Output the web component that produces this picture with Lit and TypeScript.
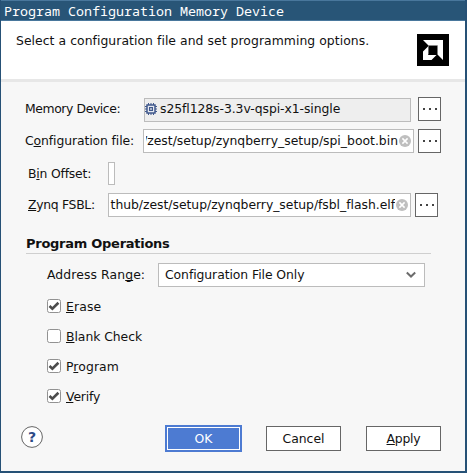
import { LitElement, html, svg, css, nothing } from "lit";
import { customElement, property } from "lit/decorators.js";

/** Text with an underlined mnemonic letter and a tracking adjustment. */
@customElement("ui-label")
class UiLabel extends LitElement {
  @property() text = "";
  @property({ type: Number }) key = -1;
  @property({ type: Number }) track = 0;

  static styles = css`
    :host { display: block; white-space: pre; line-height: 15px; }
    .key { text-decoration: underline; text-decoration-thickness: 1px; text-underline-offset: 1px; text-decoration-skip-ink: none; }
  `;

  render() {
    const { text: t, key: k } = this;
    return html`<span style="letter-spacing:${this.track}px">${k < 0
      ? t
      : html`${t.slice(0, k)}<span class="key">${t[k]}</span>${t.slice(k + 1)}`}</span>`;
  }
}

@customElement("browse-button")
class BrowseButton extends LitElement {
  static styles = css`
    :host { display: flex; box-sizing: border-box; width: 23px; height: 24px; border: 1px solid #666; background: #fff; align-items: center; padding-left: 4px; gap: 4px; flex: none; }
    i { width: 2px; height: 2px; background: #444; }
  `;
  render() {
    return html`<i></i><i></i><i></i>`;
  }
}

@customElement("check-item")
class CheckItem extends LitElement {
  @property({ type: Boolean }) checked = false;
  @property() text = "";
  @property({ type: Number }) key = 0;
  @property({ type: Number }) track = 0;

  static styles = css`
    :host { display: flex; height: 30px; gap: 5px; }
    svg { display: block; flex: none; }
  `;
  render() {
    return html`<svg width="14" height="14" viewBox="0 0 14 14">
        <rect x=".5" y=".5" width="13" height="13" rx="2" fill="#fff" stroke="#929292" />
        ${this.checked
          ? svg`<path d="M2.5 7L5.4 9.7L11.4 3.8" fill="none" stroke="#4c4c4c" stroke-width="2.6"/>`
          : nothing}
      </svg>
      <ui-label .text=${this.text} .key=${this.key} .track=${this.track}></ui-label>`;
  }
}

const clearIcon = html`<svg class="clear" width="12" height="12" viewBox="0 0 12 12">
  <circle cx="6" cy="6" r="6" fill="#bfbfbf" />
  <path d="M3.4 3.4L8.6 8.6M8.6 3.4L3.4 8.6" stroke="#fff" stroke-width="1.5" />
</svg>`;

const chipIcon = html`<svg class="chip" width="12" height="12" viewBox="0 0 12 12" fill="none" stroke="#40588c">
  <path d="M3.5 0V12M6 0V12M8.5 0V12M0 3.5H12M0 6H12M0 8.5H12" stroke-width="1" />
  <rect x="2" y="2" width="8" height="8" fill="#e6e9f0" stroke-width="1.5" />
  <rect x="4.5" y="4.5" width="3" height="3" fill="#a9b4cb" />
</svg>`;

@customElement("app-root")
class AppRoot extends LitElement {
  static styles = css`
    :host { display: block; width: 467px; height: 473px; box-sizing: border-box; overflow: hidden; background: #f7f7f7; color: #111; font: 12.4px/15px "DejaVu Sans", sans-serif; border: solid #265176; border-width: 0 2px 2px 1px; }
    .title { height: 21px; margin: 0 -2px 0 -1px; box-sizing: border-box; border: 1px solid #49779c; background: #285577; color: #fff; font: 13.33px/19px "Noto Sans Mono", "DejaVu Sans Mono", monospace; padding: 1px 0 0 3px; white-space: pre; }
    .head { height: 61px; box-sizing: border-box; border-bottom: 3px solid #e7e7e7; background: #fff; display: flex; justify-content: space-between; padding: 12px 16px 0 15px; }
    .head svg { margin-top: 1px; display: block; }
    .row { display: flex; align-items: flex-start; }
    .row > ui-label { flex: none; box-sizing: border-box; padding-top: 4px; }
    .field { display: flex; box-sizing: border-box; height: 24px; border: 1px solid #bcbcbc; background: #fff; padding-top: 3px; overflow: hidden; flex: none; }
    .path { justify-content: flex-end; padding-right: 2px; }
    .clip { overflow: hidden; display: flex; justify-content: flex-end; flex: 1; }
    .clear { flex: none; margin-top: 2px; margin-left: 1px; }
    .device { margin-top: 15px; padding-left: 24px; }
    .device .field { width: 267px; margin: 1px 7px 0 0; background: #eee; padding: 2px 0 0 0; }
    .device > ui-label { width: 119px; }
    .chip { margin: 2px 3px 0 0; }
    .config { margin-top: 7px; padding-left: 24px; }
    .config > ui-label { width: 118px; }
    .config .field { width: 271px; margin-right: 4px; padding-left: 2px; }
    .bin { margin-top: 9px; padding-left: 27px; }
    .bin > ui-label, .fsbl > ui-label { width: 80px; }
    .bin .field { width: 7px; height: 23px; }
    .fsbl { margin-top: 8px; padding-left: 27px; }
    .fsbl .field { width: 303px; margin-right: 4px; }
    .section { margin: 19px 34px 0 25px; height: 18px; box-sizing: border-box; border-bottom: 1px solid #cfcfcf; font-weight: bold; font-size: 13px; }
    .range { margin-top: 9px; padding-left: 46px; }
    .range > ui-label { width: 111px; }
    .combo { width: 267px; padding: 3px 8px 0 6px; justify-content: space-between; }
    .combo svg { margin-top: 4px; }
    .checks { margin: 12px 0 0 46px; height: 126px; }
    .foot { display: flex; padding-left: 20px; align-items: center; height: 27px; }
    .help { margin: -3px 122px 0 0; }
    .btn { box-sizing: border-box; width: 75px; height: 25px; border: 1px solid #666; background: #fff; display: flex; justify-content: center; padding-top: 4px; margin-left: 24px; }
    .btn + .btn { margin-left: 25px; }
    .ok { box-sizing: border-box; width: 77px; height: 27px; border: 2px solid #4d7bd2; background: #4d7bd2; color: #fff; box-shadow: inset 0 0 0 1px #fff; display: flex; justify-content: center; padding-top: 4px; }
    .help, .ok { flex: none; }
  `;

  render() {
    return html`
      <div class="title">Program Configuration Memory Device</div>
      <div class="head">
        <ui-label text="Select a configuration file and set programming options." track="0.05"></ui-label>
        <svg width="32" height="32" viewBox="0 0 32 32">
          <rect width="32" height="32" fill="#000" />
          <path d="M6 6H26V26L20.5 20.5V11.5H11.5Z" fill="#fff" />
          <path d="M11 12.5V21H19.5L14.5 26H6V17.5Z" fill="#fff" />
          <path d="M11.5 20.5V11.5H20.5" fill="none" stroke="#888" stroke-width=".8" />
        </svg>
      </div>
      <div class="row device">
        <ui-label text="Memory Device:" track="-0.4"></ui-label>
        <div class="field">${chipIcon}<ui-label text="s25fl128s-3.3v-qspi-x1-single" track="-0.07"></ui-label></div>
        <browse-button></browse-button>
      </div>
      <div class="row config">
        <ui-label text="Configuration file:" key="1" track="-0.1"></ui-label>
        <div class="field path"><div class="clip"><ui-label text="/zest/setup/zynqberry_setup/spi_boot.bin"></ui-label></div>${clearIcon}</div>
        <browse-button></browse-button>
      </div>
      <div class="row bin">
        <ui-label text="Bin Offset:" key="1" track="-0.2"></ui-label>
        <div class="field"></div>
      </div>
      <div class="row fsbl">
        <ui-label text="Zynq FSBL:" key="0" track="-0.3"></ui-label>
        <div class="field path"><div class="clip"><ui-label text="thub/zest/setup/zynqberry_setup/fsbl_flash.elf" track="-0.03"></ui-label></div>${clearIcon}</div>
        <browse-button></browse-button>
      </div>
      <div class="section"><ui-label text="Program Operations" track="-0.27"></ui-label></div>
      <div class="row range">
        <ui-label text="Address Range:" key="11" track="0.1"></ui-label>
        <div class="field combo">
          <ui-label text="Configuration File Only" track="-0.07"></ui-label>
          <svg width="10" height="8" viewBox="0 0 10 8"><path d="M.8 1.5L5 5.5L9.2 1.5" fill="none" stroke="#6c6c6c" stroke-width="2" /></svg>
        </div>
      </div>
      <div class="checks">
        <check-item checked text="Erase" track="0.15"></check-item>
        <check-item text="Blank Check" track="-0.05"></check-item>
        <check-item checked text="Program" key="1" track="0.1"></check-item>
        <check-item checked text="Verify" track="-0.15"></check-item>
      </div>
      <div class="foot">
        <svg class="help" width="22" height="22" viewBox="0 0 22 22">
          <circle cx="11" cy="11" r="10.4" fill="#fff" stroke="#666" />
          <text x="11" y="16" text-anchor="middle" font-family="DejaVu Sans" font-weight="bold" font-size="14" fill="#2d4a87">?</text>
        </svg>
        <div class="ok"><ui-label text="OK"></ui-label></div>
        <div class="btn"><ui-label text="Cancel"></ui-label></div>
        <div class="btn"><ui-label text="Apply" key="0" track="-0.2"></ui-label></div>
      </div>
    `;
  }
}
